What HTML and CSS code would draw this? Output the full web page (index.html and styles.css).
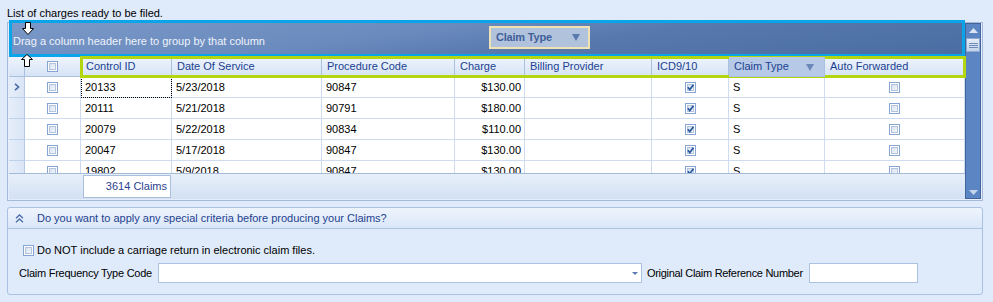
FILE: index.html
```html
<!DOCTYPE html>
<html>
<head>
<meta charset="utf-8">
<link rel="stylesheet" href="styles.css">
</head>
<body>
<div class="page">
  <div class="caption">List of charges ready to be filed.</div>
  <div class="grid-frame">
    <div class="grid-main">
      <div class="group-panel">
        Drag a column header here to group by that column
        <div class="drag-item">Claim Type<svg class="tri" width="8" height="7" viewBox="0 0 8 7"><path d="M0 0H8L4 7Z" fill="#5a79ad"/></svg></div>
      </div>
      <div class="hdr">
        <div class="h hind"></div>
        <div class="h hchk"><span class="cb"><i></i></span></div>
        <div class="hcols">
          <div class="h">Control ID</div>
          <div class="h">Date Of Service</div>
          <div class="h">Procedure Code</div>
          <div class="h">Charge</div>
          <div class="h">Billing Provider</div>
          <div class="h">ICD9/10</div>
          <div class="h hsel">Claim Type<svg class="tri" width="8" height="7" viewBox="0 0 8 7"><path d="M0 0H8L4 7Z" fill="#6a87b8"/></svg></div>
          <div class="h">Auto Forwarded</div>
        </div>
      </div>
      <div class="rows">
        <div class="row">
          <div class="c ind"><svg width="6" height="8" viewBox="0 0 6 8"><path d="M1 0.8L4.6 4L1 7.2" stroke="#4a6aa3" stroke-width="1.6" fill="none"/></svg></div>
          <div class="c ctr"><span class="cb"><i></i></span></div>
          <div class="c focus">20133</div>
          <div class="c">5/23/2018</div>
          <div class="c">90847</div>
          <div class="c r">$130.00</div>
          <div class="c"></div>
          <div class="c ctr"><span class="cb on"><i><svg width="7" height="7" viewBox="0 0 7 7"><path d="M0.8 3.2L2.8 5.6L6.4 0.8" stroke="#2b5a9f" stroke-width="1.7" fill="none"/></svg></i></span></div>
          <div class="c">S</div>
          <div class="c ctr"><span class="cb"><i></i></span></div>
        </div>
        <div class="row">
          <div class="c ind"></div>
          <div class="c ctr"><span class="cb"><i></i></span></div>
          <div class="c">20111</div>
          <div class="c">5/21/2018</div>
          <div class="c">90791</div>
          <div class="c r">$180.00</div>
          <div class="c"></div>
          <div class="c ctr"><span class="cb on"><i><svg width="7" height="7" viewBox="0 0 7 7"><path d="M0.8 3.2L2.8 5.6L6.4 0.8" stroke="#2b5a9f" stroke-width="1.7" fill="none"/></svg></i></span></div>
          <div class="c">S</div>
          <div class="c ctr"><span class="cb"><i></i></span></div>
        </div>
        <div class="row">
          <div class="c ind"></div>
          <div class="c ctr"><span class="cb"><i></i></span></div>
          <div class="c">20079</div>
          <div class="c">5/22/2018</div>
          <div class="c">90834</div>
          <div class="c r">$110.00</div>
          <div class="c"></div>
          <div class="c ctr"><span class="cb on"><i><svg width="7" height="7" viewBox="0 0 7 7"><path d="M0.8 3.2L2.8 5.6L6.4 0.8" stroke="#2b5a9f" stroke-width="1.7" fill="none"/></svg></i></span></div>
          <div class="c">S</div>
          <div class="c ctr"><span class="cb"><i></i></span></div>
        </div>
        <div class="row">
          <div class="c ind"></div>
          <div class="c ctr"><span class="cb"><i></i></span></div>
          <div class="c">20047</div>
          <div class="c">5/17/2018</div>
          <div class="c">90847</div>
          <div class="c r">$130.00</div>
          <div class="c"></div>
          <div class="c ctr"><span class="cb on"><i><svg width="7" height="7" viewBox="0 0 7 7"><path d="M0.8 3.2L2.8 5.6L6.4 0.8" stroke="#2b5a9f" stroke-width="1.7" fill="none"/></svg></i></span></div>
          <div class="c">S</div>
          <div class="c ctr"><span class="cb"><i></i></span></div>
        </div>
        <div class="row">
          <div class="c ind"></div>
          <div class="c ctr"><span class="cb"><i></i></span></div>
          <div class="c">19802</div>
          <div class="c">5/9/2018</div>
          <div class="c">90847</div>
          <div class="c r">$130.00</div>
          <div class="c"></div>
          <div class="c ctr"><span class="cb on"><i><svg width="7" height="7" viewBox="0 0 7 7"><path d="M0.8 3.2L2.8 5.6L6.4 0.8" stroke="#2b5a9f" stroke-width="1.7" fill="none"/></svg></i></span></div>
          <div class="c">S</div>
          <div class="c ctr"><span class="cb"><i></i></span></div>
        </div>
      </div>
      <div class="gfoot"><div class="summary">3614 Claims</div></div>
    </div>
    <div class="vscroll">
      <div class="sbtn"><svg width="9" height="5" viewBox="0 0 9 5"><path d="M0 5L4.5 0L9 5Z" fill="#dbe6f5"/></svg></div>
      <div class="thumb"><span></span><span></span><span></span></div>
      <div class="track"></div>
      <div class="sbtn"><svg width="9" height="5" viewBox="0 0 9 5"><path d="M0 0H9L4.5 5Z" fill="#c5d5ec"/></svg></div>
    </div>
    <svg class="cur cur-down" width="12" height="13" viewBox="0 0 12 13"><path d="M3.5 0.5H8.5V6.5H11.5L6 12.5L0.5 6.5H3.5Z" fill="#fff" stroke="#000"/></svg>
    <svg class="cur cur-up" width="14" height="13" viewBox="0 0 14 13"><path d="M7 0.5L12.5 5.5H9.5V12.5H4.5V5.5H1.5Z" fill="#fff" stroke="#000"/></svg>
  </div>

  <div class="criteria">
    <div class="crit-head">
      <svg width="9" height="9" viewBox="0 0 9 9"><path d="M1 4.2L4.5 1L8 4.2M1 8.2L4.5 5L8 8.2" stroke="#4d6ca7" stroke-width="1.3" fill="none"/></svg>
      <span>Do you want to apply any special criteria before producing your Claims?</span>
    </div>
    <div class="crit-body">
      <div class="chkline"><span class="cb"><i></i></span><span>Do NOT include a carriage return in electronic claim files.</span></div>
      <div class="formline">
        <label class="lbl1">Claim Frequency Type Code</label>
        <div class="combo"><svg width="6" height="3" viewBox="0 0 6 3"><path d="M0 0H6L3 3Z" fill="#5b7bb0"/></svg></div>
        <label class="lbl2">Original Claim Reference Number</label>
        <div class="textbox"></div>
      </div>
    </div>
  </div>
</div>
</body>
</html>
```

FILE: styles.css
```css
* { box-sizing: border-box; }

body {
  margin: 0;
  background: #dfeafa;
  font-family: "Liberation Sans", Arial, sans-serif;
  font-size: 11px;
  color: #000;
}

.page {
  width: 993px;
  padding: 6px 10px 0 7px;
}

.caption {
  height: 14px;
  line-height: 14px;
  margin-bottom: 2px;
}

/* ---------- grid ---------- */
.grid-frame {
  position: relative;
  width: 976px;
  height: 179px;
  border: 1px solid #a5bad8;
  padding: 0 1px 1px 1px;
  background: #e4edf9;
  display: flex;
}

.grid-main {
  width: 956px;
  display: flex;
  flex-direction: column;
}

.group-panel {
  position: relative;
  height: 37px;
  margin-top: -3px;
  border: 3px solid #0aa5e8;
  background: linear-gradient(172deg, #7a99c8 0%, #6a8abd 40%, #5678ad 60%, #4a6da3 100%);
  color: #eef3fb;
  padding: 11px 0 0 1px;
  line-height: 14px;
  white-space: nowrap;
}

.drag-item {
  position: absolute;
  left: 477px;
  top: 3px;
  width: 101px;
  height: 23px;
  border: 2px solid #efe3b4;
  background: #b1c2dd;
  color: #3f5f98;
  font-weight: bold;
  line-height: 19px;
  padding-left: 5px;
  letter-spacing: -0.2px;
}

.drag-item .tri {
  position: absolute;
  right: 8px;
  top: 6px;
}

.hdr {
  display: flex;
  height: 20px;
}

.h {
  height: 20px;
  background: linear-gradient(#eef4fd, #d7e4f5);
  border-right: 1px solid #a9c0df;
  border-bottom: 1px solid #a9c0df;
  color: #213f91;
  padding-left: 5px;
  line-height: 19px;
  white-space: nowrap;
  overflow: hidden;
}

.hind { width: 16px; padding: 0; }
.hchk { width: 56px; display: flex; align-items: center; justify-content: center; padding: 0; }

.hcols {
  display: grid;
  grid-template-columns: 91px 150px 133px 70px 127px 77px 96px 140px;
  outline: 3px solid #b3d611;
  outline-offset: -2px;
  position: relative;
  z-index: 2;
}

.hsel {
  position: relative;
  background: #b6c9e6;
}

.hsel .tri {
  position: absolute;
  right: 10px;
  top: 7px;
}

.rows {
  height: 96px;
  overflow: hidden;
}

.row {
  display: grid;
  grid-template-columns: 16px 56px 91px 150px 133px 70px 127px 77px 96px 140px;
  height: 21px;
}

.c {
  background: #fff;
  border-right: 1px solid #cfdcef;
  border-bottom: 1px solid #cfdcef;
  padding: 0 3px 0 4px;
  line-height: 20px;
  white-space: nowrap;
  overflow: hidden;
}

.c.ind {
  background: linear-gradient(90deg, #e6eefa, #d9e5f6);
  border-right-color: #b5c9e5;
  border-bottom-color: #bfd0e9;
  padding: 0;
  display: flex;
  align-items: center;
  justify-content: center;
}

.c.r { text-align: right; }

.c.ctr {
  display: flex;
  align-items: center;
  justify-content: center;
  padding: 0;
}

.c.focus {
  outline: 1px dotted #000;
  outline-offset: -1px;
}

/* checkbox */
.cb {
  display: inline-block;
  flex-shrink: 0;
  width: 11px;
  height: 11px;
  border: 1px solid #86a4d4;
  background: #fff;
  padding: 1px;
}

.cb i {
  display: block;
  width: 7px;
  height: 7px;
  border: 1px solid #b3c4dc;
  background: linear-gradient(135deg, #d8e2f0, #f3f6fb);
  position: relative;
}

.cb.on i svg {
  position: absolute;
  left: -1px;
  top: -1px;
}

.gfoot {
  height: 26px;
  border-top: 1px solid #a3bad9;
  background: linear-gradient(#e7effa, #d3e1f4);
  padding: 1px 0 0 74px;
}

.summary {
  width: 88px;
  height: 23px;
  background: #fff;
  border: 1px solid #aabfdc;
  color: #2d3f8f;
  text-align: right;
  padding-right: 3px;
  line-height: 21px;
}

/* scrollbar */
.vscroll {
  width: 16px;
  height: 176px;
  background: #5b86c3;
  border: 1px solid #42659d;
  display: flex;
  flex-direction: column;
}

.sbtn {
  height: 12px;
  display: flex;
  align-items: center;
  justify-content: center;
}

.thumb {
  height: 14px;
  margin-top: 2px;
  background: linear-gradient(#e5edf8, #c3d3ea);
  border: 1px solid #8ea8cf;
  display: flex;
  flex-direction: column;
  align-items: center;
  justify-content: center;
  gap: 1px;
}

.thumb span {
  display: block;
  width: 9px;
  height: 1px;
  background: #6f8cb9;
}

.track { flex: 1; }

.cur {
  position: absolute;
  z-index: 5;
}
.cur-down { left: 14px; top: -1px; }
.cur-up { left: 12px; top: 31px; }

/* ---------- criteria ---------- */
.criteria {
  margin-top: 6px;
  width: 976px;
  height: 88px;
  border: 1px solid #a9c1e2;
  border-radius: 3px;
}

.crit-head {
  height: 21px;
  background: linear-gradient(#eef4fd, #dae7f8);
  border-bottom: 1px solid #aac3e4;
  display: flex;
  align-items: center;
  padding-left: 7px;
  color: #24418f;
  border-radius: 3px 3px 0 0;
  white-space: nowrap;
}

.crit-head svg { margin-right: 13px; }

.crit-body {
  padding: 15px 0 0 11px;
}

.chkline {
  display: flex;
  align-items: center;
  gap: 3px;
  height: 12px;
  margin-left: 4px;
  white-space: nowrap;
}

.formline {
  margin-top: 7px;
  display: flex;
  align-items: center;
  height: 20px;
  white-space: nowrap;
}

.lbl1 {
  width: 139px;
  flex-shrink: 0;
  letter-spacing: -0.25px;
}

.combo {
  width: 484px;
  height: 20px;
  flex-shrink: 0;
  background: #fff;
  border: 1px solid #abc1e0;
  display: flex;
  align-items: center;
  justify-content: flex-end;
  padding-right: 3px;
}

.lbl2 {
  width: 167px;
  flex-shrink: 0;
  padding-left: 5px;
  letter-spacing: -0.3px;
}

.textbox {
  width: 109px;
  height: 20px;
  flex-shrink: 0;
  background: #fff;
  border: 1px solid #abc1e0;
}
```
